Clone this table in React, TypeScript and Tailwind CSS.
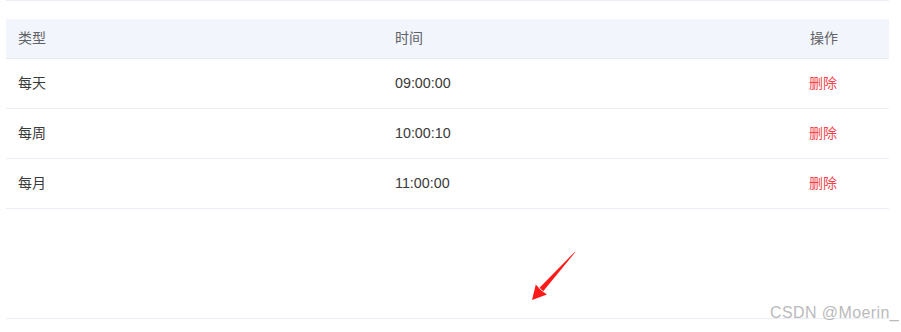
import React from "react";

const rows = [
  { type: "每天", time: "09:00:00" },
  { type: "每周", time: "10:00:10" },
  { type: "每月", time: "11:00:00" },
];

export default function App() {
  return (
    <div
      className="relative w-[901px] h-[332px] bg-white overflow-hidden"
      style={{ fontFamily: '"Liberation Sans", "Noto Sans CJK SC", sans-serif' }}
    >
      <div className="flex flex-col h-full">
        <div className="ml-[6px] w-[883px] h-px bg-[#ebeef5]" />
        <div className="ml-[6px] w-[883px] mt-[18px] text-[14px]">
          <div className="grid grid-cols-[377px_414px_92px] h-[40px] items-center bg-[#f2f5fc] border-b border-[#e8eaf2] text-[#606266]">
            <div className="pl-[12px]">类型</div>
            <div className="pl-[12px]">时间</div>
            <div className="pl-[13px]">操作</div>
          </div>
          {rows.map((r) => (
            <div
              key={r.type}
              className="grid grid-cols-[377px_414px_92px] h-[50px] items-center border-b border-[#ebeef5] text-[#3a3a3a]"
            >
              <div className="pl-[12px]">{r.type}</div>
              <div className="pl-[12px] text-[14.3px]">{r.time}</div>
              <div className="pl-[12px] text-[#f5424a]">删除</div>
            </div>
          ))}
        </div>
        <div className="flex-1" />
        <div className="ml-[6px] w-[883px] h-px bg-[#ebeef5] mb-[13px]" />
      </div>

      <svg
        className="absolute left-[520px] top-[240px]"
        width="70"
        height="70"
        viewBox="0 0 70 70"
      >
        <polygon points="55.6,11.8 54.4,12.2 19.5,47.8 23.2,51.3" fill="#ff1a1a" />
        <polygon points="12,60 15.8,44.6 20.9,50.2 27,54.6" fill="#ff1a1a" />
      </svg>

      <div className="absolute left-[770px] top-[305px] text-[16px] text-[#bababa] leading-none tracking-[0.4px]">
        CSDN @Moerin_
      </div>
    </div>
  );
}
